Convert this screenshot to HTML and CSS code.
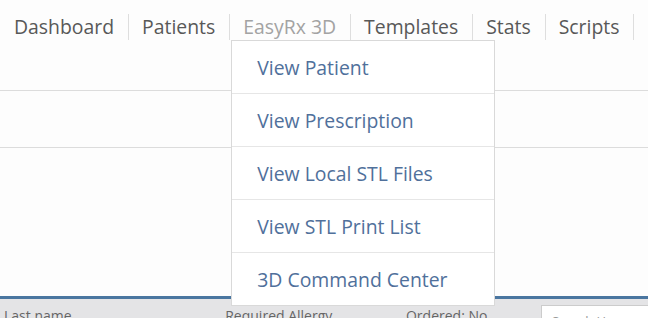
FILE: index.html
```html
<!DOCTYPE html>
<html lang="en">
<head>
    <meta charset="UTF-8">
    <title>EasyRx</title>
    <link rel="stylesheet" href="styles.css">
</head>
<body>
  <div class="nav">
    <div class="navitem">Dashboard</div>
    <div class="navitem">Patients</div>
    <div class="navitem active">EasyRx 3D
      <div class="dropdown">
        <div class="dditem">View Patient</div>
        <div class="dditem">View Prescription</div>
        <div class="dditem">View Local STL Files</div>
        <div class="dditem">View STL Print List</div>
        <div class="dditem">3D Command Center</div>
      </div>
    </div>
    <div class="navitem">Templates</div>
    <div class="navitem">Stats</div>
    <div class="navitem">Scripts</div>
  </div>
  <div class="band"></div>
  <div class="blank"></div>
  <div class="footer">
    <div class="ftext">
      <span class="f1">Last name</span>
      <span class="f2">Required Allergy</span>
      <span class="f3">Ordered: No</span>
    </div>
    <div class="search">Search Here</div>
  </div>
</body>
</html>
```

FILE: styles.css
```css
html,body,div,span{margin:0;padding:0;}
html,body{
  width:100%;
  height:100%;
  overflow:hidden;
  background-color:#fdfdfd;
  font-family:"Open Sans","Noto Sans",sans-serif;
}
.nav{
  display:flex;
  height:91px;
  padding-top:14px;
  box-sizing:border-box;
  border-bottom:1px solid #dcdcdc;
}
.navitem{
  position:relative;
  height:26px;
  line-height:26px;
  padding:0 14px 0 13px;
  font-size:19.4px;
  color:#585858;
  white-space:nowrap;
  border-right:1px solid #dedede;
}
.navitem:first-child{
  padding-left:14px;
}
.navitem.active{
  color:#a3a3a3;
}
.dropdown{
  position:absolute;
  top:26px;
  left:1px;
  width:262px;
  background:#fff;
  border:1px solid #d9d9d9;
  border-top:none;
  z-index:10;
}
.dditem{
  height:52px;
  line-height:54px;
  padding-left:25px;
  font-size:19.4px;
  color:#50709b;
  border-top:1px solid #e6e6e6;
}
.dditem:first-child{
  border-top:1px solid #d9d9d9;
}
.band{
  height:56px;
  border-bottom:1px solid #dcdcdc;
}
.blank{
  height:148px;
  border-bottom:3px solid #4a76a0;
}
.footer{
  position:relative;
  height:30px;
  background:#e4e4e6;
  display:flex;
}
.ftext{
  padding-top:8px;
  font-size:14px;
  line-height:18px;
  color:#666;
  white-space:nowrap;
}
.f1{margin-left:4px;}
.f2{margin-left:150px;}
.f3{margin-left:70px;}
.search{
  position:absolute;
  top:6px;
  left:541px;
  width:120px;
  height:24px;
  background:#fff;
  border:1px solid #ccc;
  font-size:13px;
  color:#999;
  padding:6px 0 0 10px;
  box-sizing:border-box;
}
```
